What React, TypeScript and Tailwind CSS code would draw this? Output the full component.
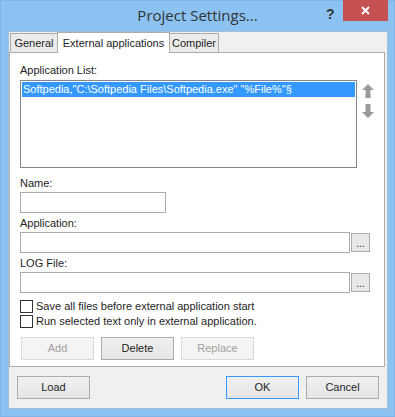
import React from 'react';

const font = { fontFamily: '"Liberation Sans", Arial, sans-serif' };

const Field = ({ label, width, browse }: { label: string; width: string; browse?: boolean }) => (
    <div className="flex flex-col">
        <div className="h-[15px] leading-[15px] text-[11px] text-[#1e1e1e]">{label}</div>
        <div className="mt-[1px] flex items-start">
            <div className={`${width} h-[21px] border border-[#ababab] bg-white`} />
            {browse && (
                <div className="ml-[1px] mt-[1px] w-[19px] h-[19px] border border-[#acacac] bg-[#e8e8e8] flex items-end justify-center pb-[3px] text-[10px] leading-[8px] text-[#1e1e1e]">
                    ...
                </div>
            )}
        </div>
    </div>
);

const Check = ({ text }: { text: string }) => (
    <div className="flex items-center h-[14px]">
        <div className="w-[13px] h-[13px] border border-[#333] bg-white" />
        <span className="ml-[3px] text-[11px] leading-[14px] text-[#1e1e1e]">{text}</span>
    </div>
);

const Btn = ({ children, disabled, primary, className = '' }: { children: React.ReactNode; disabled?: boolean; primary?: boolean; className?: string }) => (
    <div
        className={`h-[23px] w-[73px] flex items-center justify-center text-[11px] border ${
            disabled
                ? 'border-[#d9d9d9] bg-[#f4f4f4] text-[#a0a0a0]'
                : primary
                ? 'border-[#3399ff] bg-gradient-to-b from-[#f0f0f0] to-[#e5e5e5] text-[#1e1e1e]'
                : 'border-[#acacac] bg-gradient-to-b from-[#f0f0f0] to-[#e5e5e5] text-[#1e1e1e]'
        } ${className}`}
    >
        {children}
    </div>
);

const Arrow = ({ down }: { down?: boolean }) => (
    <svg width="12" height="14" viewBox="0 0 12 14" className={down ? 'rotate-180' : ''}>
        <path d="M6 0 L12 6 L8.5 6 L8.5 14 L3.5 14 L3.5 6 L0 6 Z" fill="#999999" />
    </svg>
);

export default function App() {
    return (
        <div className="w-[395px] h-[417px] bg-[#8bc2f2] border border-[#7fb5e8] flex flex-col" style={font}>
            {/* title bar */}
            <div className="h-[30px] relative flex items-start justify-center">
                <span className="text-[15px] leading-[20px] text-[#333] mt-[4px]" style={{ fontFamily: '"Open Sans", "Liberation Sans", sans-serif' }}>
                    Project Settings...
                </span>
                <span className="absolute left-[325px] top-[3px] text-[14px] font-bold text-[#333]">?</span>
                <div className="absolute left-[342px] top-[-1px] w-[45px] h-[21px] bg-[#c75050] flex items-center justify-center">
                    <svg width="9" height="9" viewBox="0 0 9 9">
                        <path d="M1 1 L8 8 M8 1 L1 8" stroke="white" strokeWidth="2" />
                    </svg>
                </div>
            </div>

            {/* client area */}
            <div className="ml-[7px] w-[380px] h-[378px] bg-[#f0f0f0] border border-[#a9bfd6] flex flex-col">
                {/* tabs */}
                <div className="h-[20px] flex items-end pl-[1px] relative z-10">
                    <div className="w-[48px] h-[19px] border border-b-0 border-[#acacac] bg-[#ebebeb] flex items-center justify-center text-[11px] text-[#1e1e1e]">
                        General
                    </div>
                    <div className="w-[113px] h-[21px] -mb-[1px] border border-b-0 border-[#acacac] bg-white flex items-start pt-[2px] justify-center text-[11px] text-[#1e1e1e] -ml-[1px]">
                        External applications
                    </div>
                    <div className="w-[50px] h-[19px] border border-b-0 border-[#acacac] bg-[#ebebeb] flex items-center justify-center text-[11px] text-[#1e1e1e] -ml-[1px]">
                        Compiler
                    </div>
                </div>

                {/* panel */}
                <div className="w-[376px] h-[315px] bg-white border border-[#acacac] flex flex-col pl-[10px] pt-[10px]">
                    <div className="h-[15px] leading-[15px] text-[11px] text-[#1e1e1e]">Application List:</div>
                    <div className="mt-[2px] flex items-start">
                        <div className="w-[337px] h-[88px] border border-[#828790] bg-white p-[1px]">
                            <div className="h-[15px] bg-[#3399ff] text-white text-[11px] leading-[15px] pl-[1px] whitespace-nowrap overflow-hidden">
                                Softpedia,"C:\Softpedia Files\Softpedia.exe" "%File%"§
                            </div>
                        </div>
                        <div className="ml-[5px] mt-[4px] flex flex-col gap-[6px]">
                            <Arrow />
                            <Arrow down />
                        </div>
                    </div>

                    <div className="mt-[8px]">
                        <Field label="Name:" width="w-[146px]" />
                    </div>
                    <div className="mt-[3px]">
                        <Field label="Application:" width="w-[330px]" browse />
                    </div>
                    <div className="mt-[3px]">
                        <Field label="LOG File:" width="w-[330px]" browse />
                    </div>

                    <div className="mt-[6px] flex flex-col gap-[1px]">
                        <Check text="Save all files before external application start" />
                        <Check text="Run selected text only in external application." />
                    </div>

                    <div className="mt-[9px] ml-[1px] flex gap-[7px]">
                        <Btn disabled>Add</Btn>
                        <Btn>Delete</Btn>
                        <Btn disabled>Replace</Btn>
                    </div>
                </div>

                {/* bottom buttons */}
                <div className="mt-[9px] flex items-center pl-[8px] pr-[8px]">
                    <Btn>Load</Btn>
                    <div className="flex-1" />
                    <Btn primary>OK</Btn>
                    <Btn className="ml-[7px]">Cancel</Btn>
                </div>
            </div>
        </div>
    );
}
